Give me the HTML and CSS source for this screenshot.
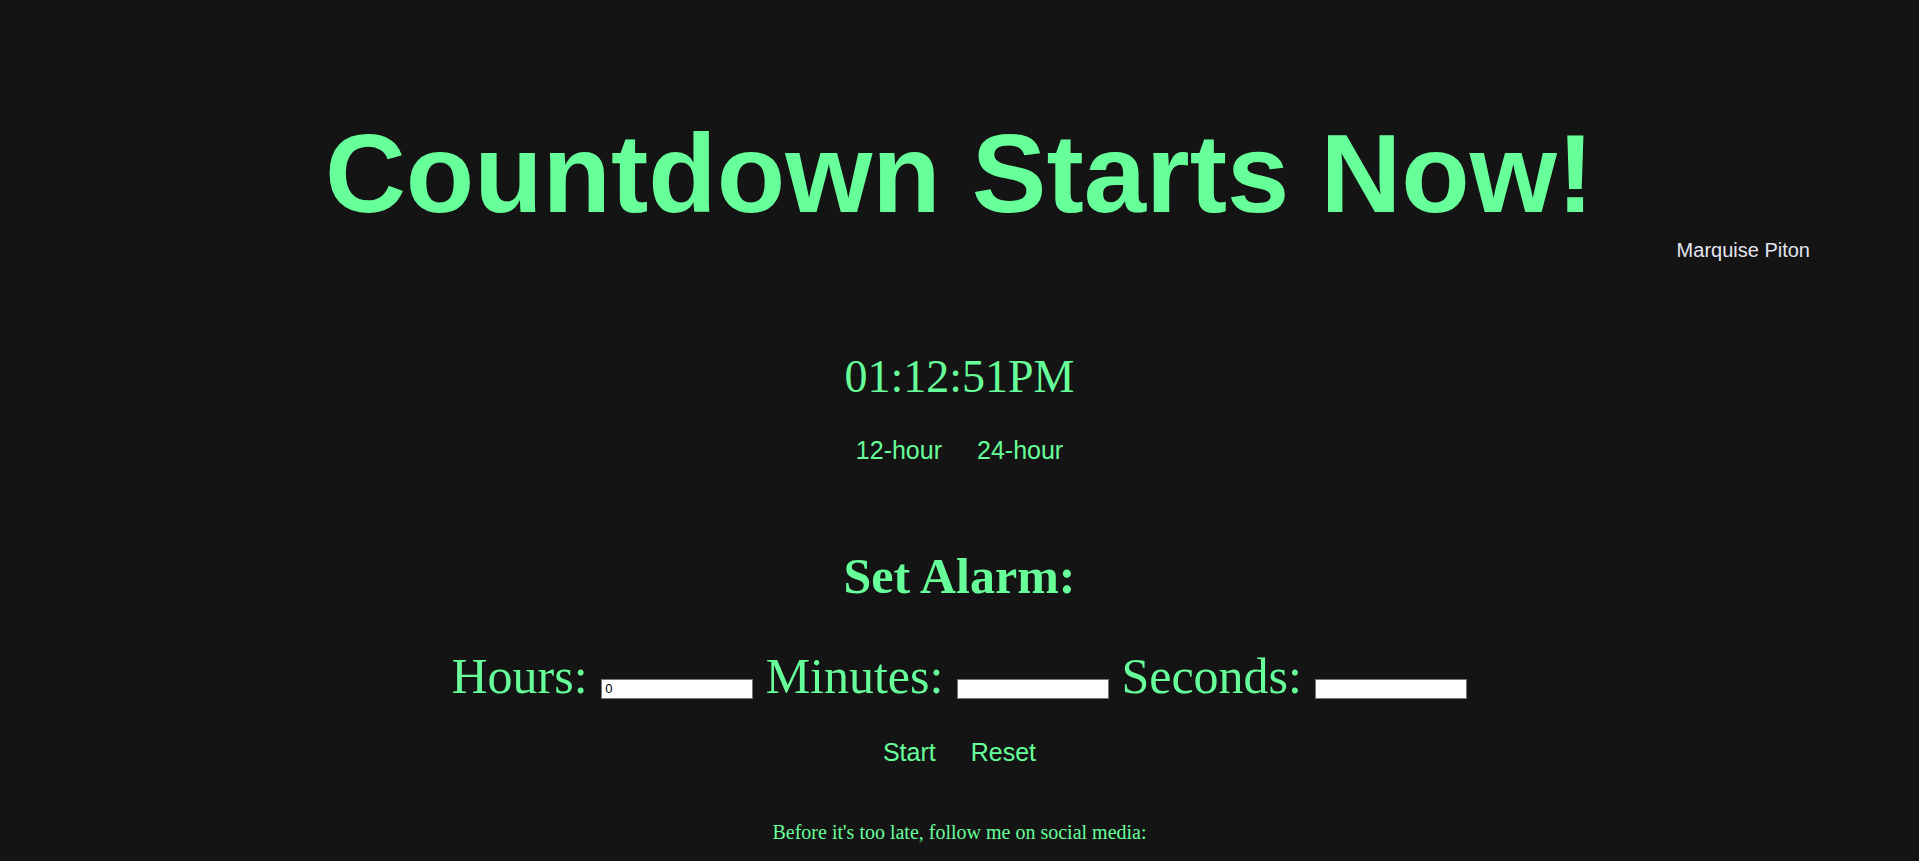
FILE: index.html
```html
<!DOCTYPE html>
<html lang="en">
<head>
<meta charset="utf-8">
<title>Countdown Starts Now!</title>
<link rel="stylesheet" href="styles.css">
</head>
<body>
<header class="header">
  <h1 class="title">Countdown Starts Now!</h1>
  <p class="author">Marquise Piton</p>
</header>
<main class="main">
  <div class="clock">01:12:51PM</div>
  <div class="btn-row format-row">
    <button class="text-btn">12-hour</button>
    <button class="text-btn">24-hour</button>
  </div>
  <h2 class="alarm-title">Set Alarm:</h2>
  <div class="alarm-row">
    <label class="field">Hours: <input class="time-input" type="text" value="0"></label>
    <label class="field">Minutes: <input class="time-input" type="text"></label>
    <label class="field">Seconds: <input class="time-input" type="text"></label>
  </div>
  <div class="btn-row action-row">
    <button class="text-btn">Start</button>
    <button class="text-btn">Reset</button>
  </div>
  <p class="social">Before it's too late, follow me on social media:</p>
</main>
</body>
</html>
```

FILE: styles.css
```css
html, body {
  margin: 0;
  padding: 0;
  background: #141414;
}

body {
  color: #66ff99;
  font-family: "Liberation Serif", "Times New Roman", serif;
  overflow: hidden;
}

.header {
  padding-top: 109px;
}

.title {
  margin: 0;
  font-family: "Liberation Sans", Arial, sans-serif;
  font-weight: 700;
  font-size: 112px;
  line-height: normal;
  text-align: center;
  color: #66ff99;
}

.author {
  margin: 1px 0 0 0;
  padding-right: 109px;
  text-align: right;
  font-family: "Liberation Sans", Arial, sans-serif;
  font-size: 20px;
  line-height: normal;
  color: #e4e4f0;
}

.main {
  display: flex;
  flex-direction: column;
  align-items: center;
}

.clock {
  margin-top: 88px;
  font-size: 46px;
  line-height: normal;
}

.btn-row {
  display: flex;
  justify-content: center;
  gap: 35px;
}

.format-row {
  margin-top: 33px;
}

.action-row {
  margin-top: 33px;
}

.text-btn {
  background: none;
  border: none;
  padding: 0;
  margin: 0;
  color: #66ff99;
  font-family: "Liberation Sans", Arial, sans-serif;
  font-size: 25px;
  line-height: normal;
  cursor: pointer;
}

.alarm-title {
  margin: 82px 0 0 0;
  font-size: 50px;
  font-weight: 700;
  line-height: normal;
}

.alarm-row {
  margin-top: 42px;
  font-size: 50px;
  line-height: normal;
  white-space: nowrap;
}

.field {
  font-size: 50px;
}

.time-input {
  box-sizing: border-box;
  width: 152px;
  height: 20px;
  margin: 0 0 0 1px;
  padding: 1px 2px 2px 3px;
  border: 1px solid #767676;
  background: #ffffff;
  color: #000000;
  font-family: "Liberation Sans", Arial, sans-serif;
  font-size: 13px;
  line-height: 15px;
  vertical-align: baseline;
}

.social {
  margin: 54px 0 0 0;
  font-size: 20px;
  line-height: normal;
}
```
